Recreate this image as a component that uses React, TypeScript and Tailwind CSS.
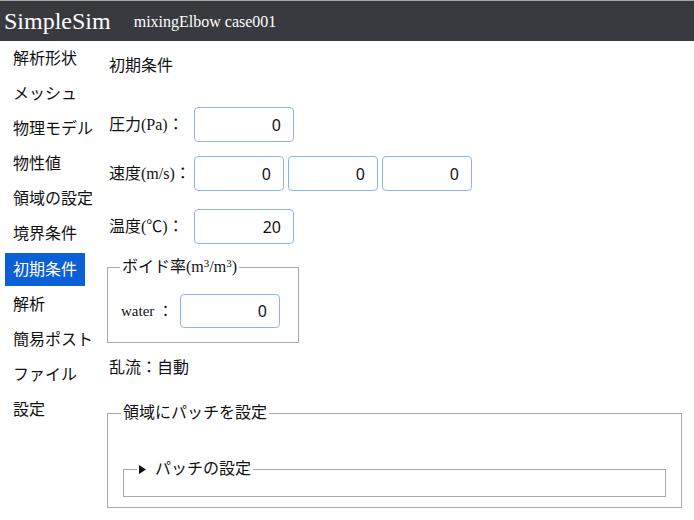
import React from 'react';

const serif = { fontFamily: '"Liberation Serif", "Noto Sans CJK JP", serif' };

const navItems = [
  '解析形状',
  'メッシュ',
  '物理モデル',
  '物性値',
  '領域の設定',
  '境界条件',
  '初期条件',
  '解析',
  '簡易ポスト',
  'ファイル',
  '設定',
];

function NumInput({ value, w = 'w-[100px]' }: { value: string; w?: string }) {
  return (
    <input
      readOnly
      value={value}
      className={`${w} h-[35px] rounded-[4px] border border-[#8ab4f8] bg-white pr-[12px] text-right text-[16px] text-[#111] outline-none`}
      style={{ fontFamily: '"Noto Sans", "Liberation Sans", sans-serif' }}
    />
  );
}

function Field({ label, children }: { label: React.ReactNode; children: React.ReactNode }) {
  return (
    <div className="flex items-center">
      <span className="w-[86px] pl-[1px] text-[16px] leading-[24px]">{label}</span>
      <div className="flex gap-[4px]">{children}</div>
    </div>
  );
}

export default function App() {
  return (
    <div className="min-h-[520px] w-[694px] bg-white text-[#111]" style={serif}>
      <header className="flex h-[41px] items-center border-t border-[#a6a6a6] bg-[#383a3f] text-white">
        <span className="ml-[4px] text-[24px] leading-[30px]" style={{ fontFamily: '"Liberation Serif", serif' }}>
          SimpleSim
        </span>
        <span className="ml-[23px] mt-[2px] text-[16px]">mixingElbow case001</span>
      </header>

      <div className="flex">
        <nav className="flex w-[108px] shrink-0 flex-col items-start pl-[5px] pt-[1px]">
          {navItems.map((item) => (
            <div
              key={item}
              className={`mb-[2.2px] flex h-[33px] items-center px-[8px] text-[16px] ${
                item === '初期条件' ? 'bg-[#0b5fd7] text-white' : 'text-[#111]'
              }`}
            >
              {item}
            </div>
          ))}
        </nav>

        <main className="flex-1 pr-[12px] pt-[13px]">
          <h2 className="pl-[1px] text-[16px] leading-[24px]">初期条件</h2>

          <div className="mt-[29px]">
            <Field label="圧力(Pa)：">
              <NumInput value="0" />
            </Field>
          </div>
          <div className="mt-[14px]">
            <Field label="速度(m/s)：">
              <NumInput value="0" w="w-[90px]" />
              <NumInput value="0" w="w-[90px]" />
              <NumInput value="0" w="w-[90px]" />
            </Field>
          </div>
          <div className="mt-[18px]">
            <Field label="温度(℃)：">
              <NumInput value="20" />
            </Field>
          </div>

          {/* ボイド率 */}
          <fieldset className="ml-[-1px] mt-[11px] w-[192px] border border-[#a9a9a9] px-[12px] pb-[14px]">
            <legend className="px-[2px] text-[16px] leading-[24px]">
              ボイド率(m<sup className="text-[11px]">3</sup>/m<sup className="text-[11px]">3</sup>)
            </legend>
            <div className="mt-[15px] flex items-center">
              <span className="w-[60px] pl-[1px] text-[15px]">water ：</span>
              <NumInput value="0" w="w-[100px] !h-[34px]" />
            </div>
          </fieldset>

          <p className="mt-[13px] pl-[1px] text-[16px] leading-[24px]">乱流：自動</p>

          {/* patch */}
          <fieldset className="ml-[-1px] mt-[21px] border border-[#a9a9a9] pb-[10px] pl-[13px] pr-[15px]">
            <legend className="px-[2px] text-[16px] leading-[24px]">領域にパッチを設定</legend>
            <fieldset className="ml-[2px] mt-[32px] border border-[#a9a9a9] pb-[15px] pl-[13px]">
              <legend className="flex items-center px-[2px] text-[16px] leading-[24px]">
                <svg width="7" height="9" viewBox="0 0 7 9" className="mr-[9px]">
                  <path d="M0 0 L7 4.5 L0 9 Z" fill="#111" />
                </svg>
                パッチの設定
              </legend>
            </fieldset>
          </fieldset>
        </main>
      </div>
    </div>
  );
}
